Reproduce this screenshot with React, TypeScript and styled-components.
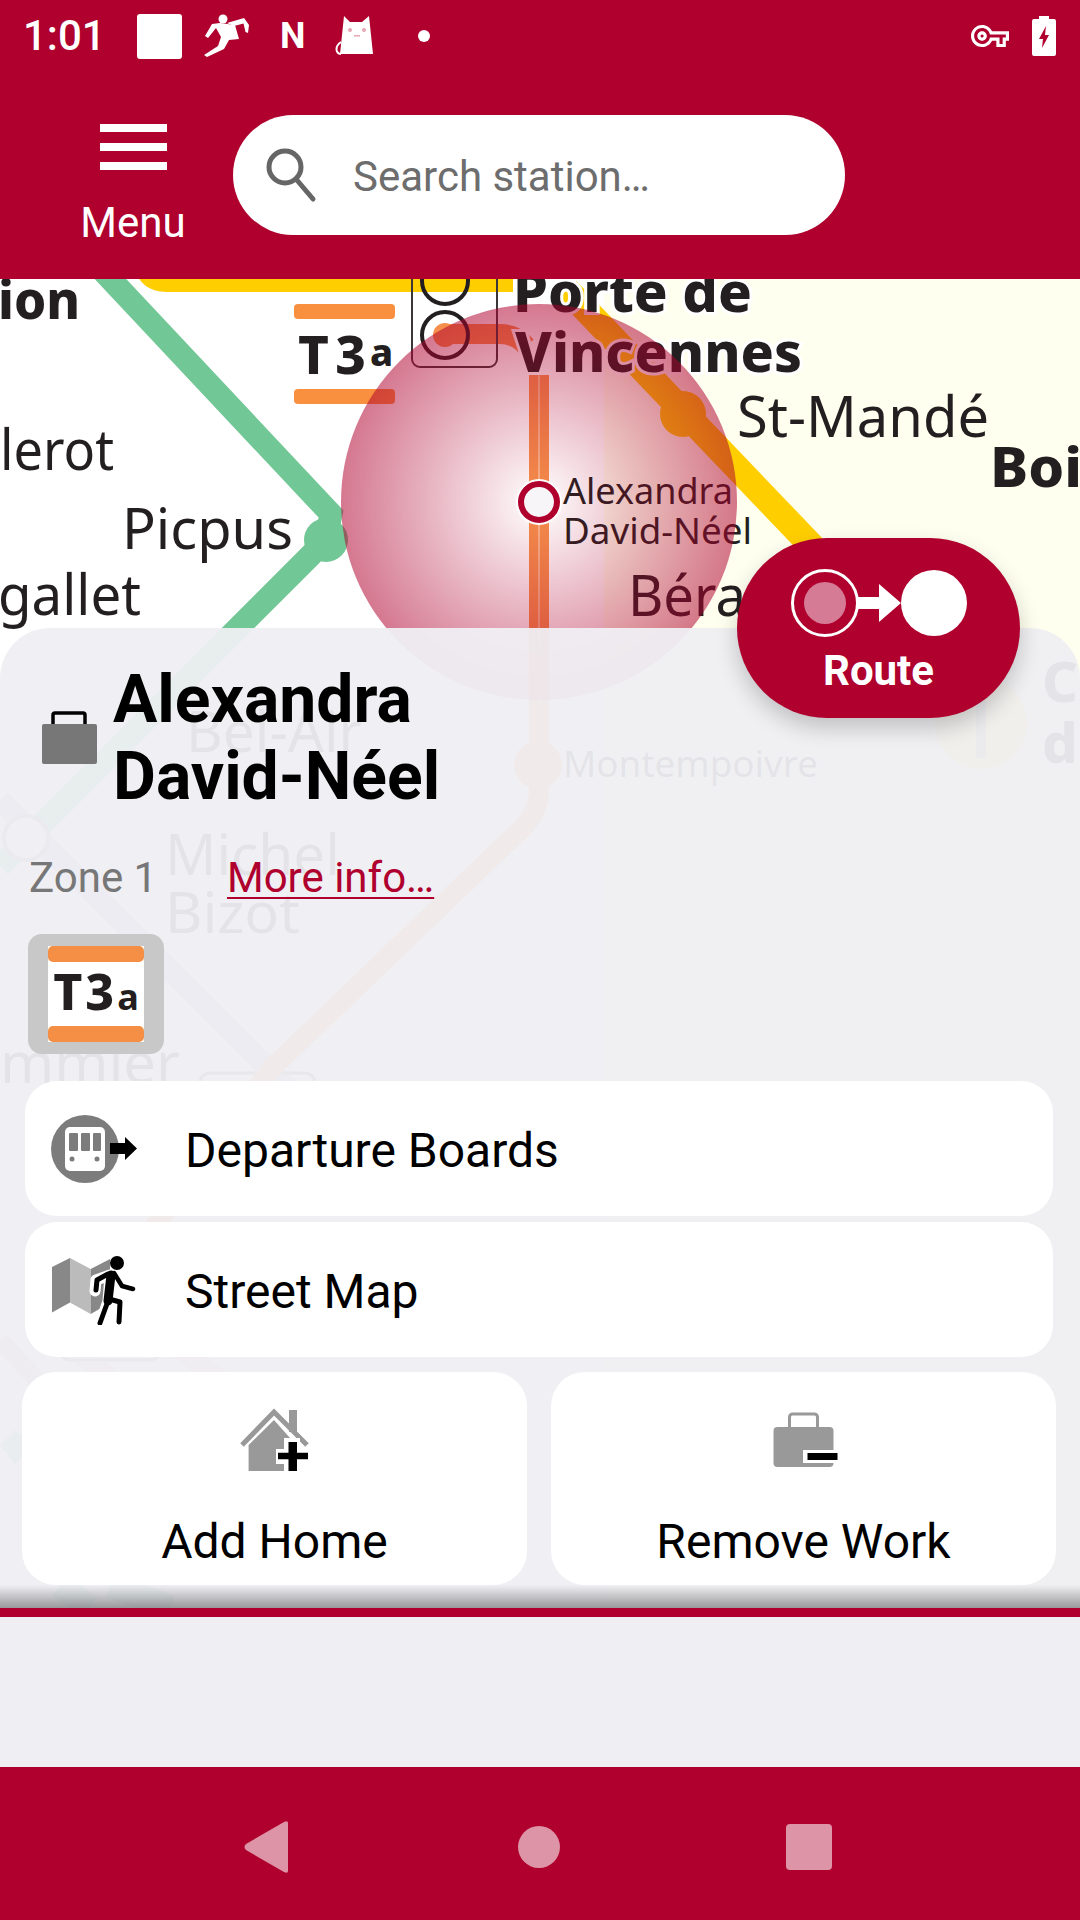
import React from "react";
import styled, { createGlobalStyle } from "styled-components";
import { MdOutlineVpnKey } from "react-icons/md";

const RED = "#AF002E";

const Global = createGlobalStyle`
  html, body { margin: 0; padding: 0; background: #eeeef3; }
  * { box-sizing: border-box; }
  body { font-family: Roboto, "Liberation Sans", sans-serif; }
`;

const Page = styled.div`
  width: 1080px;
  height: 1920px;
  display: flex;
  flex-direction: column;
  overflow: hidden;
  background: #eeeef3;
`;

const Header = styled.header`
  flex: 0 0 279px;
  background: ${RED};
  display: flex;
  flex-direction: column;
  color: #fff;
`;

const StatusBar = styled.div`
  height: 72px;
  display: flex;
  align-items: center;
  padding: 0 24px;
`;

const Clock = styled.span`
  font-size: 42px;
  font-weight: 500;
  line-height: 72px;
  width: 114px;
  margin-left: -1px;
`;

const StatusIcon = styled.svg<{ $gap?: number }>`
  display: block;
  flex: none;
  margin-right: ${(p) => p.$gap ?? 0}px;
  fill: #fff;
`;

const NetworkLetter = styled.span`
  width: 55px;
  margin-left: -2px;
  font-size: 36px;
  font-weight: 700;
`;

const StatusRight = styled.div`
  margin-left: auto;
  display: flex;
  align-items: center;
  gap: 23px;
  color: #fff;
`;

const Toolbar = styled.div`
  flex: 1;
  display: flex;
  align-items: flex-start;
  padding-top: 43px;
`;

const MenuButton = styled.button`
  all: unset;
  box-sizing: border-box;
  width: 233px;
  display: flex;
  flex-direction: column;
  align-items: center;
  padding: 9px 0 0 33px;
`;

const MenuBar = styled.span`
  flex: none;
  width: 67px;
  height: 8px;
  background: #fff;
  margin-bottom: 11px;
`;

const MenuLabel = styled.span`
  font-size: 42px;
  line-height: 48px;
  margin-top: 18px;
  color: #fff;
`;

const SearchBox = styled.div`
  width: 612px;
  height: 120px;
  border-radius: 60px;
  background: #fff;
  display: flex;
  align-items: center;
  padding-left: 33px;
`;

const SearchText = styled.span`
  margin-left: 35px;
  padding-top: 3px;
  font-size: 42px;
  color: #6d6d6d;
`;

const MapStage = styled.main`
  flex: 0 0 1329px;
  position: relative;
  overflow: hidden;
  background: #fff;
`;

const MapCanvas = styled.svg`
  position: absolute;
  inset: 0;
  width: 1080px;
  height: 1329px;
`;

const MapLabel = styled.text<{ $bold?: boolean; $size: number; $halo?: boolean }>`
  font-family: "Noto Sans", "Open Sans", sans-serif;
  font-size: ${(p) => p.$size}px;
  font-weight: ${(p) => (p.$bold ? 800 : 400)};
  fill: #231f20;
  paint-order: stroke;
  stroke: ${(p) => (p.$halo ? "#fff" : "none")};
  stroke-width: ${(p) => (p.$halo ? 6 : 0)}px;
`;

const Panel = styled.section`
  position: absolute;
  left: 0;
  right: 0;
  top: 349px;
  bottom: 0;
  border-radius: 50px 50px 0 0;
  background: rgba(239, 239, 243, 0.945);
  display: flex;
  flex-direction: column;
`;

const TitleRow = styled.div`
  display: flex;
  align-items: center;
  margin: 33px 0 0 42px;
`;

const Title = styled.h1`
  margin: 0 0 0 16px;
  font-size: 66px;
  line-height: 77px;
  font-weight: 700;
  color: #000;
`;

const InfoRow = styled.div`
  display: flex;
  margin: 39px 0 0 29px;
  font-size: 42px;
  line-height: 48px;
`;

const Zone = styled.span`
  width: 198px;
  color: #777;
`;

const MoreLink = styled.a`
  color: ${RED};
  text-decoration: underline;
  text-underline-offset: 5px;
  text-decoration-thickness: 2px;
`;

const LineChip = styled.div`
  width: 136px;
  height: 120px;
  margin: 32px 0 0 28px;
  padding: 12px 20px;
  border-radius: 14px;
  background: #c8c8c8;
`;

const LineBadge = styled.div`
  height: 96px;
  background: #fff;
  display: flex;
  flex-direction: column;
  justify-content: space-between;
  align-items: stretch;
  overflow: hidden;
`;

const LineStripe = styled.span`
  height: 16px;
  border-radius: 5px;
  background: #f58f45;
`;

const LineName = styled.span`
  font-family: "Noto Sans", sans-serif;
  font-weight: 800;
  font-size: 50px;
  line-height: 56px;
  color: #231f20;
  text-align: center;
  white-space: nowrap;
  letter-spacing: 3px;
  small {
    font-size: 36px;
    font-weight: 700;
    letter-spacing: 0;
  }
`;

const ActionRow = styled.button<{ $first?: boolean }>`
  all: unset;
  box-sizing: border-box;
  height: 135px;
  margin: ${(p) => (p.$first ? 27 : 6)}px 27px 0 25px;
  border-radius: 32px;
  background: #fff;
  display: flex;
  align-items: center;
  font-size: 48px;
  color: #000;
`;

const RowText = styled.span`
  padding-top: 3px;
`;

const RowIcon = styled.svg`
  flex: none;
  width: 90px;
  height: 70px;
  margin: 0 45px 0 25px;
`;

const SplitRow = styled.div`
  display: grid;
  grid-template-columns: 505px 505px;
  gap: 24px;
  margin: 15px 0 0 22px;
`;

const TileButton = styled.button`
  all: unset;
  box-sizing: border-box;
  height: 213px;
  border-radius: 34px;
  background: #fff;
  display: flex;
  flex-direction: column;
  align-items: center;
  padding-top: 36px;
  font-size: 48px;
  line-height: 54px;
  color: #000;
  text-align: center;
`;

const TileIcon = styled.svg`
  display: block;
  width: 70px;
  height: 64px;
  margin-bottom: 43px;
`;

const Shade = styled.div`
  margin-top: auto;
  height: 23px;
  background: linear-gradient(rgba(0, 0, 0, 0), rgba(0, 0, 0, 0.36));
`;

const RouteButton = styled.button`
  all: unset;
  position: absolute;
  left: 737px;
  top: 259px;
  width: 283px;
  height: 180px;
  border-radius: 90px;
  background: ${RED};
  box-shadow: 0 10px 22px rgba(0, 0, 0, 0.2);
  display: flex;
  flex-direction: column;
  align-items: center;
  padding-top: 30px;
  box-sizing: border-box;
`;

const RouteIcon = styled.svg`
  display: block;
  width: 180px;
  height: 70px;
`;

const RouteLabel = styled.span`
  margin-top: 9px;
  font-size: 42px;
  line-height: 48px;
  font-weight: 700;
  color: #fff;
`;

const Rule = styled.div`
  flex: 0 0 9px;
  background: ${RED};
`;

const Filler = styled.div`
  flex: 1;
  background: #eeeef3;
`;

const NavBar = styled.nav`
  flex: 0 0 153px;
  background: ${RED};
  display: flex;
  align-items: center;
  padding: 7px 0 0 244px;
`;

const NavBack = styled.svg`
  width: 44px;
  height: 52px;
  fill: rgba(255, 255, 255, 0.58);
`;

const NavHome = styled.span`
  width: 42px;
  height: 42px;
  margin-left: 230px;
  border-radius: 50%;
  background: rgba(255, 255, 255, 0.58);
`;

const NavRecent = styled.span`
  width: 46px;
  height: 46px;
  margin-left: 226px;
  border-radius: 4px;
  background: rgba(255, 255, 255, 0.58);
`;

type Label = { t: string; x: number; y: number; s: number; w?: number; b?: boolean; h?: boolean };

const LABELS: Label[] = [
  { t: "ion", x: -2, y: 319, s: 54, w: 82, b: true },
  { t: "lerot", x: 0, y: 470, s: 56, w: 114 },
  { t: "Picpus", x: 122, y: 549, s: 56, w: 171 },
  { t: "gallet", x: -2, y: 615, s: 56, w: 143 },
  { t: "Porte de", x: 513, y: 312, s: 56, w: 239, b: true, h: true },
  { t: "Vincennes", x: 515, y: 372, s: 56, w: 287, b: true, h: true },
  { t: "St-Mandé", x: 737, y: 437, s: 56, w: 252 },
  { t: "Boi", x: 990, y: 487, s: 56, w: 92, b: true },
  { t: "Alexandra", x: 563, y: 504, s: 36, w: 170 },
  { t: "David-Néel", x: 563, y: 544, s: 36, w: 189 },
  { t: "Béra", x: 628, y: 616, s: 56, w: 118 },
  { t: "Bel-Air", x: 186, y: 752, s: 56, w: 176 },
  { t: "Montempoivre", x: 563, y: 777, s: 36, w: 255 },
  { t: "Michel", x: 165, y: 875, s: 56, w: 175 },
  { t: "Bizot", x: 165, y: 933, s: 56, w: 135 },
  { t: "mmier", x: 0, y: 1083, s: 56, w: 180 },
  { t: "C", x: 1042, y: 702, s: 56, b: true },
  { t: "d", x: 1042, y: 763, s: 56, b: true },
];

const MapDrawing = () => (
  <MapCanvas viewBox="0 279 1080 1329">
    <defs>
      <radialGradient id="halo">
        <stop offset="0" stopColor={RED} stopOpacity="0" />
        <stop offset="1" stopColor={RED} stopOpacity="0.53" />
      </radialGradient>
    </defs>
    <rect x="604" y="279" width="476" height="1329" fill="#feffee" />
    <path d="M135 270 Q142 292 168 292 H513 V270 Z" fill="#ffce00" />
    <path d="M567 290 L981 723" stroke="#ffce00" strokeWidth="26" fill="none" />
    <circle cx="683" cy="414" r="23" fill="#ffce00" />
    <circle cx="981" cy="723" r="46" fill="#ffe96a" />
    <path d="M981 690 V758" stroke="#a9a08c" strokeWidth="10" />
    <path d="M102 270 L331 514 L326 540 L60 806 L0 866" stroke="#72c796" strokeWidth="23" fill="none" />
    <circle cx="326" cy="540" r="22" fill="#72c796" />
    <path d="M0 800 L290 1090" stroke="#b9b6dc" strokeWidth="22" fill="none" />
    <path d="M180 1350 L320 1450 M60 1340 L140 1400" stroke="#e6bfc8" strokeWidth="20" fill="none" />
    <path d="M0 1340 L120 1470" stroke="#cfb8c0" strokeWidth="18" fill="none" />
    <path d="M0 1445 L15 1430 L35 1445 L15 1465 Z M20 1480 L40 1465 L60 1480 L40 1500 Z" fill="#85c9a8" />
    <path d="M110 1585 L170 1608 M60 1585 L90 1608" stroke="#85c9a8" strokeWidth="26" fill="none" />
    <circle cx="26" cy="838" r="22" fill="#fff" stroke="#9a9a9a" strokeWidth="4" />
    <rect x="200" y="1073" width="115" height="60" rx="10" fill="none" stroke="#777" strokeWidth="3" />
    <rect x="60" y="1300" width="100" height="60" rx="10" fill="none" stroke="#999" strokeWidth="3" />
    <path d="M445 334 H500 Q516 334 526 346" stroke="#f68f4b" strokeWidth="20" fill="none" />
    <path
      d="M539 375 V790 Q539 815 515 835 L270 1070 L100 1300"
      stroke="#f68f4b"
      strokeWidth="20"
      fill="none"
    />
    <path d="M539 375 V790" stroke="#fff" strokeOpacity="0.35" strokeWidth="2" />
    <circle cx="538" cy="765" r="24" fill="#f68f4b" />
    <rect x="294" y="304" width="101" height="15" rx="4" fill="#f8903f" />
    <rect x="294" y="389" width="101" height="15" rx="4" fill="#f8903f" />
    <MapLabel $bold $size={53} x={298} y={374} textLength={68} lengthAdjust="spacing">
      T3
    </MapLabel>
    <MapLabel $bold $size={38} x={370} y={366}>
      a
    </MapLabel>
    <rect x="412" y="270" width="85" height="97" rx="8" fill="none" stroke="#3b3638" strokeWidth="2" />
    <circle cx="445" cy="281" r="23" fill="none" stroke="#231f20" strokeWidth="4" />
    <circle cx="445" cy="335" r="12" fill="#f68f4b" />
    <circle cx="445" cy="335" r="23" fill="none" stroke="#231f20" strokeWidth="4" />
    {LABELS.map((l) => (
      <MapLabel
        key={l.t}
        $bold={l.b}
        $halo={l.h}
        $size={l.s}
        x={l.x}
        y={l.y}
        textLength={l.w}
        lengthAdjust={l.w ? "spacingAndGlyphs" : undefined}
      >
        {l.t}
      </MapLabel>
    ))}
    <circle cx="539" cy="502" r="198" fill="url(#halo)" />
    <circle cx="539" cy="502" r="23" fill="#fff" />
    <circle cx="539" cy="502" r="18" fill="#f8f5f8" stroke={RED} strokeWidth="6" />
  </MapCanvas>
);

export default function App() {
  return (
    <Page>
      <Global />
      <Header>
        <StatusBar>
          <Clock>1:01</Clock>
          <StatusIcon width="45" height="45" viewBox="0 0 45 45" $gap={21}>
            <rect width="45" height="45" rx="3" />
          </StatusIcon>
          <StatusIcon width="48" height="44" viewBox="0 0 48 44" $gap={31}>
            <circle cx="20" cy="5" r="4.5" />
            <path d="M17 9 L32 11 L36 25 L26 26 L21 35 L4 43 L1 41 L15 32 L18 23 L13 14 L5 24 L2 22 L9 10 Z" />
            <path d="M24 9 L41 4 L46 11 L45 19 L42.5 18 L40.5 9.5 L31 12 Z" />
          </StatusIcon>
          <NetworkLetter>N</NetworkLetter>
          <StatusIcon width="40" height="40" viewBox="0 0 40 40" $gap={43}>
            <path d="M9 0 L15 6 H27 L34 0 L38 38 H5 Z" />
            <path d="M6 26 C0 30 0 37 6 38" fill="none" stroke="#fff" strokeWidth="2" />
            <circle cx="15" cy="14" r="2" fill="#e7a5b5" />
            <circle cx="29" cy="14" r="2" fill="#e7a5b5" />
            <rect x="19" y="19" width="6" height="1.5" fill="#e7a5b5" />
          </StatusIcon>
          <StatusIcon width="12" height="12" viewBox="0 0 12 12">
            <circle cx="6" cy="6" r="6" />
          </StatusIcon>
          <StatusRight>
            <MdOutlineVpnKey size={38} />
            <StatusIcon width="24" height="40" viewBox="0 0 24 40">
              <path d="M7 0 H17 V3 H22 A2 2 0 0 1 24 5 V38 A2 2 0 0 1 22 40 H2 A2 2 0 0 1 0 38 V5 A2 2 0 0 1 2 3 H7 Z" />
              <path d="M14 10 L7 23 H11 L10 32 L17 19 H13 Z" fill={RED} />
            </StatusIcon>
          </StatusRight>
        </StatusBar>
        <Toolbar>
          <MenuButton>
            <MenuBar />
            <MenuBar />
            <MenuBar />
            <MenuLabel>Menu</MenuLabel>
          </MenuButton>
          <SearchBox>
            <svg width="52" height="56" viewBox="0 0 52 56" fill="none" stroke="#666" strokeWidth="5">
              <circle cx="19" cy="20" r="16" />
              <path d="M30 32 L47 52" strokeLinecap="round" />
            </svg>
            <SearchText>Search station…</SearchText>
          </SearchBox>
        </Toolbar>
      </Header>
      <MapStage>
        <MapDrawing />
        <Panel>
          <TitleRow>
            <svg width="55" height="54" viewBox="0 0 55 54">
              <path d="M11 14 V4 A2 2 0 0 1 13 2 H41 A2 2 0 0 1 43 4 V14" fill="none" stroke="#000" strokeWidth="3.5" />
              <rect y="13" width="55" height="40" rx="2" fill="#777" />
            </svg>
            <Title>
              Alexandra
              <br />
              David-Néel
            </Title>
          </TitleRow>
          <InfoRow>
            <Zone>Zone 1</Zone>
            <MoreLink>More info…</MoreLink>
          </InfoRow>
          <LineChip>
            <LineBadge>
              <LineStripe />
              <LineName>
                T3<small>a</small>
              </LineName>
              <LineStripe />
            </LineBadge>
          </LineChip>
          <ActionRow $first>
            <RowIcon viewBox="0 0 90 70">
              <circle cx="35" cy="35" r="34" fill="#7c7c7c" />
              <rect x="15" y="13" width="40" height="44" rx="5" fill="#fff" />
              <rect x="19" y="19" width="9" height="18" rx="1" fill="#7c7c7c" />
              <rect x="31" y="19" width="9" height="18" rx="1" fill="#7c7c7c" />
              <rect x="43" y="19" width="8" height="18" rx="1" fill="#7c7c7c" />
              <circle cx="22" cy="45" r="2.5" fill="#7c7c7c" />
              <circle cx="47" cy="45" r="2.5" fill="#7c7c7c" />
              <path d="M60 29 H75 V23 L87 34.5 L75 46 V40 H60 Z" fill="#000" />
            </RowIcon>
            <RowText>Departure Boards</RowText>
          </ActionRow>
          <ActionRow>
            <RowIcon viewBox="0 0 90 70">
              <path d="M2 12 L20 3 V47.5 L2 57.5 Z" fill="#888" />
              <path d="M20 3 L40.7 14 V59 L20 47.5 Z" fill="#bbb" />
              <path d="M40.7 14 L60 4 V48 L40.7 59 Z" fill="#888" />
              <g fill="none" stroke="#fff" strokeWidth="11" strokeLinecap="round" strokeLinejoin="round">
                <path d="M60 20 L58 46 M58 46 L50 69 M58 44 L70 44 L69 68 M60 20 L46 25 L45 36" />
              </g>
              <circle cx="67" cy="8" r="7" fill="#000" />
              <g fill="none" stroke="#000" strokeLinecap="round" strokeLinejoin="round">
                <path d="M61 20 L58 46" strokeWidth="9" />
                <path d="M58 46 L50 68 M59 44 L70 47 L69 67" strokeWidth="5" />
                <path d="M58 19 L47 25 L46 35" strokeWidth="5" />
                <path d="M64 18 L72 31 L83 34" strokeWidth="4.5" />
              </g>
            </RowIcon>
            <RowText>Street Map</RowText>
          </ActionRow>
          <SplitRow>
            <TileButton>
              <TileIcon viewBox="0 0 70 64">
                <rect x="49" y="2" width="8" height="22" fill="#999" />
                <path d="M2 37 L34 4 L67 37" fill="none" stroke="#999" strokeWidth="5" />
                <path d="M8.6 37 L34 12 L50 30 H46 V41 H36 V54 H46 V63 H8.6 Z" fill="#999" />
                <path d="M44 30 H60 V41 H70 V56 H60 V64 H44 V56 H36 V41 H44 Z" fill="#fff" />
                <path d="M48.5 34 H57 V44.7 H68 V51.3 H57 V63 H48.5 V51.3 H38 V44.7 H48.5 Z" fill="#000" />
              </TileIcon>
              Add Home
            </TileButton>
            <TileButton>
              <TileIcon viewBox="0 0 70 64">
                <g transform="translate(4.5 4)">
                  <path d="M16 15 V5 A3 3 0 0 1 19 2 H41 A3 3 0 0 1 44 5 V15" fill="none" stroke="#999" strokeWidth="3" />
                  <rect y="15" width="60" height="40" rx="4" fill="#999" />
                  <rect x="29.5" y="38" width="36" height="13" fill="#fff" />
                  <rect x="34" y="41" width="30" height="7" fill="#000" />
                </g>
              </TileIcon>
              Remove Work
            </TileButton>
          </SplitRow>
          <Shade />
        </Panel>
        <RouteButton>
          <RouteIcon viewBox="0 0 180 70">
            <circle cx="36" cy="35" r="32.5" fill="none" stroke="#fff" strokeWidth="3" />
            <circle cx="36" cy="35" r="21" fill="#d67b95" />
            <path d="M69 29 H90 V16 L112 35 L90 54 V41 H69 Z" fill="#fff" />
            <circle cx="145" cy="35" r="33" fill="#fff" />
          </RouteIcon>
          <RouteLabel>Route</RouteLabel>
        </RouteButton>
      </MapStage>
      <Rule />
      <Filler />
      <NavBar>
        <NavBack viewBox="0 0 44 52">
          <path d="M44 2 V50 Q44 53 40 51 L2 29 Q-1 26 2 23 L40 1 Q44 -1 44 2 Z" />
        </NavBack>
        <NavHome />
        <NavRecent />
      </NavBar>
    </Page>
  );
}
